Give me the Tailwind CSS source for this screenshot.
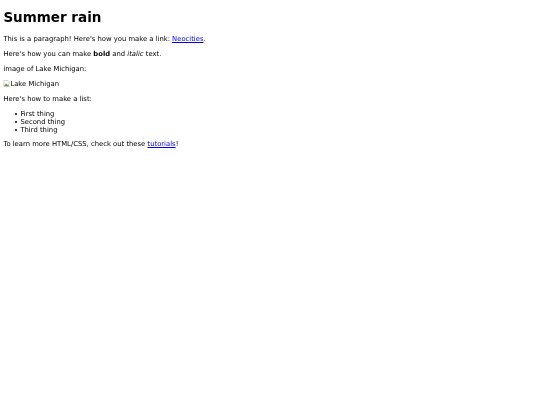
<!DOCTYPE html>
<html>
<head>
<script src="https://cdn.jsdelivr.net/npm/@tailwindcss/browser@4"></script>
</head>
<body class="bg-white text-black font-['DejaVu_Sans',sans-serif] text-[6.82px] leading-[8px] px-[3.4px] pt-[9px] blur-[0.25px]">
<h1 class="text-[13.5px] leading-[16px] font-bold mb-[10px]">Summer rain</h1>
<p class="mb-[6.8px]">This is a paragraph! Here's how you make a link: <a href="#" class="text-[#0000ee] underline">Neocities</a>.</p>
<p class="mb-[6.8px]">Here's how you can make <strong class="font-bold">bold</strong> and <em class="italic">italic</em> text.</p>
<p class="mb-[7.4px]">image of Lake Michigan:</p>
<p class="mb-[6.8px] flex items-center h-[8px]">
<svg class="w-[7px] h-[7px] shrink-0" viewBox="0 0 16 16"><path d="M2 1h9l3 3v11H2z" fill="#fff" stroke="#999"/><path d="M3 12l4-4 3 3 2-1 1 1v3H3z" fill="#6a9e4f"/></svg>
<span>Lake Michigan</span></p>
<p class="mb-[6.8px]">Here's how to make a list:</p>
<ul class="pl-[17px] mb-[6.4px]">
<li class="flex items-center before:content-[''] before:w-[2px] before:h-[2px] before:rounded-full before:bg-black before:ml-[-5.5px] before:mr-[3.5px]">First thing</li>
<li class="flex items-center before:content-[''] before:w-[2px] before:h-[2px] before:rounded-full before:bg-black before:ml-[-5.5px] before:mr-[3.5px]">Second thing</li>
<li class="flex items-center before:content-[''] before:w-[2px] before:h-[2px] before:rounded-full before:bg-black before:ml-[-5.5px] before:mr-[3.5px]">Third thing</li>
</ul>
<p>To learn more HTML/CSS, check out these <a href="#" class="text-[#0000ee] underline">tutorials</a>!</p>
</body>
</html>
